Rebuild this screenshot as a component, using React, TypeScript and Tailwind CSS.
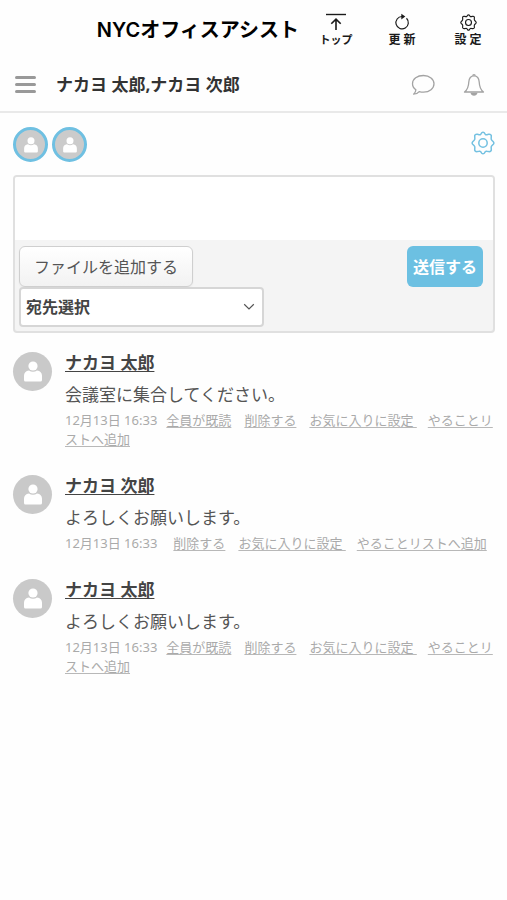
import { useState } from "react";

type Message = {
  id: number;
  author: string;
  body: string;
  time: string;
  read: boolean;
};

const messages: Message[] = [
  { id: 1, author: "ナカヨ 太郎", body: "会議室に集合してください。", time: "12月13日 16:33", read: true },
  { id: 2, author: "ナカヨ 次郎", body: "よろしくお願いします。", time: "12月13日 16:33", read: false },
  { id: 3, author: "ナカヨ 太郎", body: "よろしくお願いします。", time: "12月13日 16:33", read: true },
];

const gearPath =
  "M10.700 1.800Q12 .6 13.300 1.800L14.200 3.200Q14.900 4 15.900 3.700L17.600 3.300Q19.800 3 20.300 4.400L20.200 7Q20 8.400 20.800 9.200L22.300 10.700Q23.400 12 22.300 13.300L20.800 14.800Q20 15.600 20.200 17L20.300 19.300Q19.800 20.900 17.600 20.600L15.900 20.300Q14.900 20 14.200 20.800L13.300 22.200Q12 23.400 10.700 22.200L9.800 20.800Q9.100 20 8.100 20.300L6.400 20.600Q4.200 20.900 3.700 19.300L3.800 17Q4 15.600 3.200 14.800L1.700 13.300Q.6 12 1.700 10.700L3.200 9.200Q4 8.400 3.800 7L3.700 4.400Q4.200 3 6.400 3.300L8.100 3.700Q9.100 4 9.800 3.200Z";

function GearIcon({ className }: { className: string }) {
  return (
    <svg viewBox="0 0 24 24" className={className} fill="none" stroke="currentColor" aria-hidden="true">
      <path d={gearPath} strokeLinejoin="round" />
      <circle cx="12" cy="12" r="4.200" />
    </svg>
  );
}

function TopIcon() {
  return (
    <svg viewBox="0 0 20 18" className="h-[18px] w-5" fill="none" stroke="currentColor" aria-hidden="true">
      <path d="M0 1.500h20" strokeWidth="1.400" />
      <path d="M10 17V6M5.300 10.800L10 6.100l4.700 4.700" strokeWidth="1.600" />
    </svg>
  );
}

function ReloadIcon() {
  return (
    <svg viewBox="0 0 18 18" className="size-[18px]" fill="none" stroke="currentColor" aria-hidden="true">
      <path d="M13.500 5.300A6.200 6.200 0 1 1 9 3.500" strokeWidth="1.200" />
      <path d="M8.300.8l4 2.700-4 2.900z" fill="currentColor" stroke="none" />
    </svg>
  );
}

function ChatIcon() {
  return (
    <svg viewBox="0 0 24 22" className="h-[22px] w-6" fill="none" stroke="currentColor" strokeWidth="1.300" strokeLinejoin="round" aria-hidden="true">
      <path d="M12.500 1.500C6.300 1.500 1.500 5 1.500 9.800c0 2.500 1.300 4.600 3.400 6-.1 1.700-.9 3.200-2.300 4.400 2.300 0 4.200-.9 5.600-2.600 1.300.4 2.800.6 4.300.6 6.100 0 10.500-3.700 10.500-8.400s-4.400-8.300-10.500-8.300z" />
    </svg>
  );
}

function BellIcon() {
  return (
    <svg viewBox="0 0 22 24" className="h-6 w-[22px]" fill="none" stroke="currentColor" strokeWidth="1.300" strokeLinejoin="round" aria-hidden="true">
      <path d="M11 2.800c-3.600 0-5 2.800-5.200 6.200-.2 4.400-.6 7.300-4.300 10h19c-3.700-2.700-4.100-5.600-4.300-10-.2-3.400-1.600-6.200-5.200-6.200z" />
      <path d="M9.800 2.800a1.200 1.200 0 0 1 2.400 0" />
      <path d="M7.500 19.700h7c-.3 2-1.800 3-3.500 3s-3.200-1-3.500-3z" fill="currentColor" stroke="none" />
    </svg>
  );
}

function PersonIcon({ className }: { className: string }) {
  return (
    <svg viewBox="0 0 18 21" className={className} fill="currentColor" aria-hidden="true">
      <circle cx="9" cy="5" r="4.600" />
      <path d="M0 19v-4.200C0 11.800 1.800 10 5 9.500c2.300 1.700 5.700 1.700 8 0 3.200.5 5 2.300 5 5.300V19q0 1.500-1.500 1.500h-15Q0 20.500 0 19z" />
    </svg>
  );
}

function MemberBadge({ name }: { name: string }) {
  return (
    <span
      role="img"
      aria-label={name}
      className="flex size-[35px] items-center justify-center rounded-full border-[3px] border-[#6fc0e2] bg-[#cbcbcb] text-white"
    >
      <PersonIcon className="h-4 w-[14px]" />
    </span>
  );
}

function HeaderButton({ label, size, children }: { label: string; size: string; children: React.ReactNode }) {
  return (
    <button type="button" className="flex w-[66px] flex-col items-center text-[#1a1a1a]">
      <span className="flex h-[18px] items-center">{children}</span>
      <span className={`${size} leading-[18px] font-bold`}>{label}</span>
    </button>
  );
}

const metaLink =
  "underline decoration-[#b8b8b8] decoration-1 underline-offset-2 [text-decoration-skip-ink:none]";

function MessageItem({ message }: { message: Message }) {
  return (
    <li className="flex items-start gap-[13px]">
      <span className="mt-[3px] flex size-[39px] shrink-0 items-center justify-center rounded-full bg-[#c9c9c9] text-white">
        <PersonIcon className="h-[21px] w-[18px]" />
      </span>
      <div className="min-w-0 flex-1">
        <h2 className="text-[17px] leading-7 font-bold text-[#444]">
          <a href="#author" className="underline decoration-1 underline-offset-2 [text-decoration-skip-ink:none]">
            {message.author}
          </a>
        </h2>
        <p className="pt-[2px] text-[17px] leading-8 text-[#555]">{message.body}</p>
        <p className="text-[13px] leading-[19px] text-[#aaa]">
          <time className="mr-[9px]">{message.time}</time>
          {message.read ? (
            <a href="#read" className={`mr-[13px] ${metaLink}`}>
              全員が既読
            </a>
          ) : (
            <span className="mr-[7px]" />
          )}
          <a href="#delete" className={`mr-[13px] ${metaLink}`}>
            削除する
          </a>
          <a href="#favorite" className={`mr-[11px] ${metaLink}`}>
            {"お気に入りに設定\u00a0"}
          </a>
          <a href="#todo" className={metaLink}>
            やることリストへ追加
          </a>
        </p>
      </div>
    </li>
  );
}

export default function App() {
  const [text, setText] = useState("");

  return (
    <div className="min-h-screen bg-[#fefefe] font-['Noto_Sans','Noto_Sans_CJK_JP',sans-serif]">
      <header className="flex h-14 items-start justify-end">
        <h1 className="mt-4 mr-1 font-['Inter','Noto_Sans_CJK_JP',sans-serif] text-xl leading-7 font-semibold whitespace-nowrap text-black">
          NYCオフィスアシスト
        </h1>
        <nav className="mt-[13px] mr-[6px] flex shrink-0">
          <HeaderButton label="トップ" size="text-[11px]">
            <TopIcon />
          </HeaderButton>
          <HeaderButton label="更 新" size="text-[12px]">
            <ReloadIcon />
          </HeaderButton>
          <HeaderButton label="設 定" size="text-[12px]">
            <GearIcon className="size-[17px] stroke-[1.6]" />
          </HeaderButton>
        </nav>
      </header>

      <div className="flex h-[57px] items-center border-b-2 border-[#e9e9e9] pt-[2px] pr-[22px] pl-[15px]">
        <button type="button" aria-label="メニュー" className="flex w-[21px] flex-col gap-1">
          <span className="h-[3px] rounded-xs bg-[#999]" />
          <span className="h-[3px] rounded-xs bg-[#999]" />
          <span className="h-[3px] rounded-xs bg-[#999]" />
        </button>
        <p className="ml-5 flex-1 text-[17px] leading-7 font-bold text-[#333]">ナカヨ 太郎,ナカヨ 次郎</p>
        <div className="flex items-center gap-7 text-[#a3a3a3]">
          <button type="button" aria-label="メッセージ">
            <ChatIcon />
          </button>
          <button type="button" aria-label="通知">
            <BellIcon />
          </button>
        </div>
      </div>

      <main className="pt-[14px] pr-3 pl-[13px]">
        <div className="flex items-center justify-between">
          <div className="flex gap-1">
            <MemberBadge name="ナカヨ 太郎" />
            <MemberBadge name="ナカヨ 次郎" />
          </div>
          <button type="button" aria-label="ルーム設定" className="mb-1 text-[#74c1e1]">
            <GearIcon className="size-6 stroke-[1.5]" />
          </button>
        </div>

        <form
          className="mt-[13px] overflow-hidden rounded-sm border-2 border-[#e0e0e0] bg-[#f4f4f4]"
          onSubmit={(event) => event.preventDefault()}
        >
          <textarea
            aria-label="メッセージ本文"
            value={text}
            onChange={(event) => setText(event.target.value)}
            className="block h-[63px] w-full resize-none bg-white px-2 py-1 text-base text-[#444] outline-none"
          />
          <div className="px-1 pt-[6px] pb-1">
            <div className="flex justify-between pr-[6px]">
              <button
                type="button"
                className="h-[41px] rounded-md border border-[#cfcfcf] bg-linear-to-b from-white to-[#f2f2f2] px-[14px] text-base text-[#555] shadow-xs"
              >
                ファイルを追加する
              </button>
              <button type="submit" className="h-[41px] rounded-md bg-[#6cc0e2] px-[6px] text-base font-bold text-white">
                送信する
              </button>
            </div>
            <div className="relative w-[245px]">
              <select
                aria-label="宛先選択"
                className="h-10 w-full appearance-none rounded-sm border-2 border-[#d6d6d6] bg-white px-[5px] text-base font-bold text-[#444] outline-none"
              >
                <option>宛先選択</option>
              </select>
              <svg
                viewBox="0 0 12 8"
                className="pointer-events-none absolute top-4 right-[9px] h-2 w-3"
                fill="none"
                stroke="#555"
                strokeWidth="1.200"
                aria-hidden="true"
              >
                <path d="M1.200 1.300L6 6l4.800-4.700" />
              </svg>
            </div>
          </div>
        </form>

        <ul className="mt-4 flex flex-col gap-[23px] pb-8">
          {messages.map((message) => (
            <MessageItem key={message.id} message={message} />
          ))}
        </ul>
      </main>
    </div>
  );
}
